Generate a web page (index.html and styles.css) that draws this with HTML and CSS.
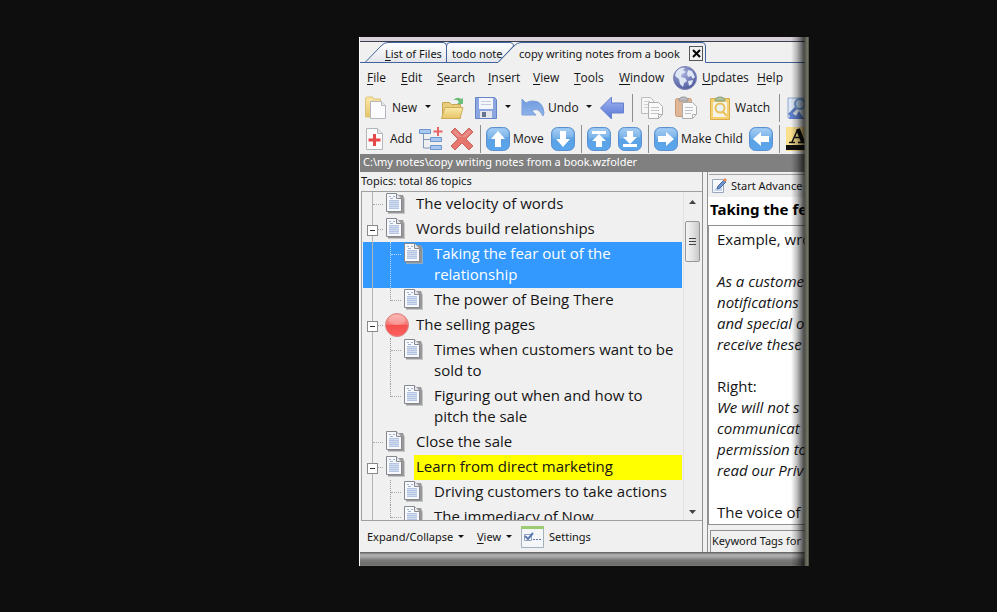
FILE: index.html
```html
<!DOCTYPE html>
<html lang="en">
<head>
<meta charset="utf-8">
<title>copy writing notes from a book</title>
<link rel="stylesheet" href="styles.css">
</head>
<body>
<svg class="defs" aria-hidden="true">
  <defs>
    <linearGradient id="blue" x1="0" y1="0" x2="0" y2="1"><stop offset="0" stop-color="#9cc8f2"/><stop offset=".5" stop-color="#5ca2e4"/><stop offset="1" stop-color="#5aa6ee"/></linearGradient>
    <linearGradient id="folder" x1="0" y1="0" x2="0" y2="1"><stop offset="0" stop-color="#fbe9a8"/><stop offset="1" stop-color="#e6c468"/></linearGradient>
    <linearGradient id="arrow" x1="0" y1="0" x2="0" y2="1"><stop offset="0" stop-color="#a3b5f3"/><stop offset="1" stop-color="#5676d4"/></linearGradient>
    <linearGradient id="undo-fill" x1="0" y1="0" x2="0" y2="1"><stop offset="0" stop-color="#6f9ade"/><stop offset="1" stop-color="#8fb4ea"/></linearGradient>
    <linearGradient id="red" x1="0" y1="0" x2="0" y2="1"><stop offset="0" stop-color="#f9aaa6"/><stop offset=".48" stop-color="#f77672"/><stop offset=".52" stop-color="#f4504e"/><stop offset="1" stop-color="#ff6260"/></linearGradient>
    <radialGradient id="sea" cx=".4" cy=".3" r=".7"><stop offset="0" stop-color="#a9b2df"/><stop offset="1" stop-color="#505b9e"/></radialGradient>
    <linearGradient id="tab" x1="0" y1="0" x2="0" y2="1"><stop offset="0" stop-color="#fff"/><stop offset="1" stop-color="#e3e6ea"/></linearGradient>
    <symbol id="doc" viewBox="0 0 20 22">
      <path d="M3 3h15l2 4v15H3z" fill="#b5b5b5" opacity=".7"/>
      <path d="M3 3h15l1 4v14H3z" fill="#8c8c8c" opacity=".8"/>
      <path d="M1.500 1.500h10l5 5v13h-15z" fill="#f8f9fc" stroke="#85888e"/>
      <path d="M11.500 1.500v5h5" fill="#e6e8ec" stroke="#85888e"/>
      <path d="M4 4.500h2M8 4.500h2M5 6.500h3" stroke="#9fb0d0"/>
      <path d="M4 8h10v9H4z" fill="#d3ddf0"/><path d="M4 8.500h10M4 10.500h10M4 12.500h10M4 14.500h10M4 16.500h10" stroke="#b4c4e2"/>
    </symbol>
    <symbol id="ball" viewBox="0 0 24 24"><circle cx="12" cy="12" r="11.500" fill="url(#red)" stroke="#d98785"/><ellipse cx="12" cy="7" rx="8.500" ry="5" fill="#fff" opacity=".22"/></symbol>
    <symbol id="tile" viewBox="0 0 24 24"><rect x=".5" y=".5" width="23" height="23" rx="6" fill="url(#blue)" stroke="#5b8fd0"/><path d="M2 12V7q0-5 5-5h10q5 0 5 5v3q-9 0-20 2z" fill="#fff" opacity=".15"/></symbol>
    <symbol id="up" viewBox="0 0 24 24"><use href="#tile"/><path d="M12 4l7 8h-4v8H9v-8H5z" fill="#fff"/></symbol>
    <symbol id="down" viewBox="0 0 24 24"><use href="#tile"/><path d="M12 20l7-8h-4V4H9v8H5z" fill="#fff"/></symbol>
    <symbol id="right" viewBox="0 0 24 24"><use href="#tile"/><path d="M20 12l-8-7v4H4v6h8v4z" fill="#fff"/></symbol>
    <symbol id="left" viewBox="0 0 24 24"><use href="#tile"/><path d="M4 12l8-7v4h8v6h-8v4z" fill="#fff"/></symbol>
    <symbol id="top" viewBox="0 0 24 24"><use href="#tile"/><path d="M5 4h14v3H5zM12 7l7 7h-4v6H9v-6H5z" fill="#fff"/></symbol>
    <symbol id="bottom" viewBox="0 0 24 24"><use href="#tile"/><path d="M5 17h14v3H5zM12 17l7-7h-4V4H9v6H5z" fill="#fff"/></symbol>
    <symbol id="new" viewBox="0 0 22 24"><path d="M.500 3l1-2h6l1 2h7v18H.500z" fill="url(#folder)" stroke="#dcc27a"/><path d="M5.500 5.500h11l4 4v13h-15z" fill="#fcfcfe" stroke="#b3b6bd"/><path d="M16.500 5.500v4h4" fill="#e8eaee" stroke="#b3b6bd"/></symbol>
    <symbol id="open" viewBox="0 0 24 24"><path d="M2.500 6.500h7l2 2h9v14h-18z" fill="#e8cd7d" stroke="#c5a452"/><path d="M5 11.500h18l-3 11H1.500z" fill="url(#folder)" stroke="#cfad58"/><path d="M13 4q5-4 8-1l2-1v6h-6l2-2q-2-3-6-2z" fill="#6cbd7a"/></symbol>
    <symbol id="save" viewBox="0 0 24 24"><path d="M1.500 1.500h19l2 2v19h-21z" fill="#8ba6e0" stroke="#6683c6"/><path d="M5 2h14v11H5z" fill="#f3f5fa"/><path d="M7 5.500h10M7 8.500h10" stroke="#c4ccdd"/><path d="M6 15h12v7H6z" fill="#e4e6eb"/><path d="M8 16h4v5H8z" fill="#66748f"/></symbol>
    <symbol id="undo" viewBox="0 0 24 24"><path d="M1 3v16h14l-4-4q6-5 11 5l1-3q-1-12-11-12-5 0-7 2z" fill="url(#undo-fill)" stroke="#7d9fdc"/></symbol>
    <symbol id="back" viewBox="0 0 24 24"><path d="M.500 12L11.500 1v6h12v10h-12v6z" fill="url(#arrow)" stroke="#6580cd"/></symbol>
    <symbol id="copy" viewBox="0 0 24 24"><path d="M1.500 1.500h9l3 3v13h-12z" fill="#f6f6f6" stroke="#bcbcbc"/><path d="M4 5.500h6M4 8.500h6M4 11.500h5" stroke="#cfcfcf"/><path d="M8.500 6.500h10l4 4v8l-4 4h-10z" fill="#fafafa" stroke="#aeaeae"/><path d="M11 11.500h8M11 14.500h8M11 17.500h8" stroke="#c4c4c4"/><path d="M18.500 22.500v-4h4" fill="none" stroke="#aeaeae"/></symbol>
    <symbol id="paste" viewBox="0 0 24 24"><rect x="1.500" y="2.500" width="16" height="18" rx="2" fill="#dfb796" stroke="#c69a77"/><path d="M5 5q0-4 4.500-4T14 5z" fill="#bcbcc0" stroke="#999"/><path d="M8.500 6.500h10l4 4v8l-4 4h-10z" fill="#fafafa" stroke="#aeaeae"/><path d="M11 11.500h8M11 14.500h8M11 17.500h6" stroke="#b9c0cc"/><path d="M18.500 22.500v-4h4" fill="none" stroke="#aeaeae"/></symbol>
    <symbol id="watch" viewBox="0 0 24 24"><path d="M2.500 2.500h19v21h-19z" fill="#f5d26f" stroke="#dcaa4a"/><path d="M5 6h14v15H5z" fill="#f4f3e6"/><path d="M7 5q0-4 5-4t5 4z" fill="#a9bd98" stroke="#8aa07b"/><circle cx="12" cy="12" r="4.500" fill="#e8f3f8" stroke="#ecc05a" stroke-width="2"/><path d="M15 16l4 4" stroke="#ecc05a" stroke-width="2"/></symbol>
    <symbol id="find" viewBox="0 0 24 24"><path d="M2 2h20v20H2z" fill="#dce7f5" stroke="#8fa9cf"/><circle cx="14" cy="8" r="5" fill="#bdd4ee" stroke="#6e93cb" stroke-width="2"/><path d="M10 12l-7 7" stroke="#5d7fc0" stroke-width="3"/><path d="M3 23l2-7 5 4 3-5 5 8z" fill="#5f82d1"/></symbol>
    <symbol id="add" viewBox="0 0 20 24"><path d="M1.500 1.500h11l5 5v16h-16z" fill="#fafafb" stroke="#b3b6bb"/><path d="M12.500 1.500v5h5" fill="#e5e7ea" stroke="#b3b6bb"/><path d="M9.500 7v12M3.500 13h12" stroke="#e5474b" stroke-width="3"/></symbol>
    <symbol id="branch" viewBox="0 0 24 24"><path d="M4.500 7v14h7M4.500 12.500h7" fill="none" stroke="#8196b8"/><g fill="#a9c8f0" stroke="#6f95cd"><path d="M.500 2.500h11v4H.500zM11.500 10.500h11v4h-11zM11.500 18.500h11v4h-11z"/></g><path d="M19 0v9M14.500 4.500h9" stroke="#e86466" stroke-width="2"/></symbol>
    <symbol id="cross" viewBox="0 0 24 24"><path d="M1 5l4-4 7 7 7-7 4 4-7 7 7 7-4 4-7-7-7 7-4-4 7-7z" fill="#e5756d" stroke="#c86660"/><path d="M3 5l2-2 7 7 7-7 2 2-5 5H8z" fill="#fff" opacity=".2"/></symbol>
    <symbol id="globe" viewBox="0 0 24 24"><circle cx="12" cy="12" r="11.500" fill="url(#sea)" stroke="#7d86b5"/><path d="M3 6q4-5 9-4l-2 2 3 2-4 2-1 3 4 1 2 3-3 2-1 4-3-3-1-5-4-3zM15 4l4 1 3 6-2 2-2-3-3 1-1-3zM15 15l5-1-1 4-3 2z" fill="#dfe7f5"/></symbol>
    <symbol id="font" viewBox="0 0 24 24"><path d="M0 0h24v24H0z" fill="#fadf8d"/><path d="M0 18h24v5H0z" fill="#111"/><path d="M3 15.500h6M12 15.500h9M6 15l6-13M7.500 10.500h8" fill="none" stroke="#111" stroke-width="1.500"/><path d="M12 2l5 13" stroke="#111" stroke-width="4"/></symbol>
    <symbol id="edit" viewBox="0 0 16 16"><path d="M1.500 1.500h11v13h-11z" fill="#f7f9fc" stroke="#9aa8be"/><path d="M3 12l8-7v8H3z" fill="#c3d6ee"/><path d="M6 11l1-3 6-6 2 2-6 6z" fill="#6d95d6" stroke="#4d6a9a"/><path d="M12 2l2-2 2 2-2 2z" fill="#e88a54"/></symbol>
    <symbol id="settings" viewBox="0 0 23 22"><path d="M.500.500h22v21H.500z" fill="#f4f6f8" stroke="#a3b1be"/><path d="M0 0h23v3H0z" fill="#9ccb74"/><path d="M3.500 8.500h7v6h-7z" fill="#fff" stroke="#8fa0bc"/><path d="M4 10l3 3 5-6" fill="none" stroke="#5b7ab5" stroke-width="2"/><path d="M12 13.500h2M15 13.500h2M18 13.500h2" stroke="#5c74a5"/></symbol>
  </defs>
</svg>
<main class="window">
  <div class="strip"></div>
  <nav class="tabs" aria-label="Open files">
    <svg class="tab-shapes" width="450" height="21" aria-hidden="true">
      <path d="M5 20.500L21 4Q24 .500 28 .500H83Q86.500.500 86.500 4V20.500z" fill="url(#tab)" stroke="#41639b"/>
      <path d="M86.500 20.500V4Q86.500.500 90 .500H149Q153.500.500 153.500 4L138 20.500z" fill="url(#tab)" stroke="#41639b"/>
      <path d="M138 20.500L154 4Q157 .500 161 .500H342Q345.500.500 345.500 4V21H138z" fill="#f0f0f0"/>
      <path d="M0 20.500H138L154 4Q157 .500 161 .500H342Q345.500.500 345.500 4V20.500H450" fill="none" stroke="#41639b"/>
    </svg>
    <button class="tab"><span><u>L</u>ist of Files</span></button>
    <button class="tab">todo note</button>
    <button class="tab">copy writing notes from a book</button>
    <button class="close" aria-label="Close tab"><svg width="9" height="9"><path d="M1 1l7 7M8 1l-7 7" stroke="#000" stroke-width="2"/></svg></button>
  </nav>
  <nav class="menu" aria-label="Menu">
    <button><span><u>F</u>ile</span></button>
    <button><span><u>E</u>dit</span></button>
    <button><span><u>S</u>earch</span></button>
    <button><span><u>I</u>nsert</span></button>
    <button><span><u>V</u>iew</span></button>
    <button><span><u>T</u>ools</span></button>
    <button><span><u>W</u>indow</span></button>
    <button><svg class="i24"><use href="#globe"/></svg><span><u>U</u>pdates</span></button>
    <button><span><u>H</u>elp</span></button>
  </nav>
  <div class="toolbar files">
    <button><svg class="i22"><use href="#new"/></svg>New</button>
    <button class="caret" aria-label="New options"></button>
    <button aria-label="Open"><svg class="i24"><use href="#open"/></svg></button>
    <button aria-label="Save"><svg class="i24"><use href="#save"/></svg></button>
    <button class="caret" aria-label="Save options"></button>
    <button class="tight"><svg class="i24"><use href="#undo"/></svg>Undo</button>
    <button class="caret" aria-label="Undo options"></button>
    <button aria-label="Back"><svg class="i24"><use href="#back"/></svg></button>
    <i class="sep"></i>
    <button aria-label="Copy"><svg class="i24"><use href="#copy"/></svg></button>
    <button aria-label="Paste"><svg class="i24"><use href="#paste"/></svg></button>
    <button class="tight"><svg class="i24"><use href="#watch"/></svg>Watch</button>
    <i class="sep"></i>
    <button aria-label="Find"><svg class="i24"><use href="#find"/></svg></button>
  </div>
  <div class="toolbar topics">
    <button><svg class="i20"><use href="#add"/></svg>Add</button>
    <button aria-label="Add branch"><svg class="i24"><use href="#branch"/></svg></button>
    <button aria-label="Delete"><svg class="i24"><use href="#cross"/></svg></button>
    <i class="sep"></i>
    <button class="tight"><svg class="i24"><use href="#up"/></svg>Move</button>
    <button aria-label="Move down"><svg class="i24"><use href="#down"/></svg></button>
    <i class="sep"></i>
    <button aria-label="Move to top"><svg class="i24"><use href="#top"/></svg></button>
    <button aria-label="Move to bottom"><svg class="i24"><use href="#bottom"/></svg></button>
    <i class="sep"></i>
    <button class="tight"><svg class="i24"><use href="#right"/></svg>Make Child</button>
    <button aria-label="Make parent"><svg class="i24"><use href="#left"/></svg></button>
    <i class="sep"></i>
    <button aria-label="Font colour"><svg class="i24"><use href="#font"/></svg></button>
  </div>
  <div class="path">C:\my notes\copy writing notes from a book.wzfolder</div>
  <div class="panes">
    <section class="outline">
      <h2 class="count">Topics: total 86 topics</h2>
      <div class="list">
        <ul class="tree">
          <li class="row"><svg class="doc"><use href="#doc"/></svg><span>The velocity of words</span></li>
          <li class="row parent"><svg class="doc"><use href="#doc"/></svg><span>Words build relationships</span></li>
          <li class="row child selected"><svg class="doc"><use href="#doc"/></svg><span>Taking the fear out of the relationship</span></li>
          <li class="row child last"><svg class="doc"><use href="#doc"/></svg><span>The power of Being There</span></li>
          <li class="row parent"><svg class="ball"><use href="#ball"/></svg><span>The selling pages</span></li>
          <li class="row child"><svg class="doc"><use href="#doc"/></svg><span>Times when customers want to be sold to</span></li>
          <li class="row child last"><svg class="doc"><use href="#doc"/></svg><span>Figuring out when and how to pitch the sale</span></li>
          <li class="row"><svg class="doc"><use href="#doc"/></svg><span>Close the sale</span></li>
          <li class="row parent marked"><svg class="doc"><use href="#doc"/></svg><span>Learn from direct marketing</span></li>
          <li class="row child"><svg class="doc"><use href="#doc"/></svg><span>Driving customers to take actions</span></li>
          <li class="row child last"><svg class="doc"><use href="#doc"/></svg><span>The immediacy of Now</span></li>
        </ul>
        <div class="scroll">
          <svg width="7" height="4"><path d="M0 4l3.500-4L7 4z" fill="#444"/></svg>
          <div class="thumb"></div>
          <svg width="7" height="4"><path d="M0 0h7L3.500 4z" fill="#444"/></svg>
        </div>
      </div>
      <div class="actions">
        <button>Expand/Collapse<i class="tri"></i></button>
        <button><span><u>V</u>iew</span><i class="tri"></i></button>
        <button><svg class="cfg"><use href="#settings"/></svg>Settings</button>
      </div>
    </section>
    <section class="note">
      <button class="advanced"><svg class="i16"><use href="#edit"/></svg>Start Advance</button>
      <h1 class="title">Taking the fear</h1>
      <div class="text">
        <p>Example, wro</p>
        <p>&nbsp;</p>
        <p><em>As a custome<br>notifications<br>and special o<br>receive these</em></p>
        <p>&nbsp;</p>
        <p>Right:</p>
        <p><em>We will not s<br>communicat<br>permission to<br>read our Priv</em></p>
        <p>&nbsp;</p>
        <p>The voice of</p>
      </div>
      <div class="keywords">Keyword Tags for</div>
    </section>
  </div>
  <div class="base"></div>
  <div class="edge"></div>
</main>
</body>
</html>
```
FILE: styles.css
```css
* { box-sizing: border-box; }
body {
  margin: 0;
  height: 100vh;
  padding: 37px 0 46px;
  display: grid;
  grid-template-columns: 359fr 450fr 188fr;
  background: #0e0e0e;
  font: 11px/16px "Noto Sans", "Open Sans", sans-serif;
  color: #151515;
  overflow: hidden;
}
.defs { position: absolute; width: 0; height: 0; }
.window {
  grid-column: 2;
  position: relative;
  display: flex;
  flex-direction: column;
  min-width: 0;
  min-height: 0;
  overflow: hidden;
  background: #f0f0f0;
  border-left: 1px solid #fff;
}
button {
  display: flex;
  align-items: center;
  padding: 0;
  border: 0;
  background: none;
  color: inherit;
  font: inherit;
  white-space: nowrap;
}
svg { flex: none; display: block; }
u { text-underline-offset: 2px; }
.i16 { width: 16px; height: 16px; }
.i20 { width: 20px; height: 24px; }
.i22 { width: 22px; height: 24px; }
.i24 { width: 24px; height: 24px; }

.strip { flex: none; height: 5px; background: #d9d0da; border-bottom: 1px solid #39414f; }
.tabs {
  flex: none;
  position: relative;
  height: 21px;
  display: grid;
  grid-template-columns: 67px 67px 170px 14px;
  align-items: center;
  padding-left: 25px;
  padding-top: 2px;
}
.tab-shapes { position: absolute; left: 0; top: 0; }
.tab { position: relative; }
.close { position: relative; width: 14px; height: 15px; justify-content: center; border: 1px solid #555; }
.menu {
  flex: none;
  height: 30px;
  display: grid;
  grid-template-columns: 34px 36px 51px 45px 41px 45px 54px 84px 40px;
  align-items: center;
  padding-left: 7px;
}
.menu, .toolbar { font-family: "Open Sans", "Noto Sans", sans-serif; font-size: 12px; }
.menu button { gap: 5px; }
.toolbar { flex: none; display: grid; height: 30px; padding-left: 5px; align-items: center; }
.toolbar button { gap: 5px; }
.toolbar .tight { gap: 3px; }
.files { grid-template-columns: 60px 15px 34px 31px 16px 65px 14px 32px 8px 34px 34px 71px 7px 24px; }
.topics { grid-template-columns: 54px 31px 30px 6px 65px 30px 6px 31px 30px 6px 95px 30px 7px 24px; height: 31px; }
.sep { width: 1px; height: 28px; background: #8e8e8e; }
.caret::before, .tri {
  content: "";
  width: 0;
  height: 3px;
  border: 3px solid transparent;
  border-top-color: #111;
  border-bottom: 0;
}
.path { flex: none; height: 18px; padding-left: 3px; background: #808080; color: #fff; white-space: nowrap; }

.panes { flex: 1; min-height: 0; display: grid; grid-template-columns: 343px 1fr; gap: 4px; }
.outline { display: flex; flex-direction: column; min-height: 0; min-width: 0; border-right: 1px solid #909090; }
.count { margin: 0; padding: 1px 0 1px 1px; height: 19px; font-size: 11px; line-height: 16px; font-weight: 400; }
.list {
  flex: 1;
  min-height: 0;
  display: grid;
  grid-template-columns: 1fr 17px;
  gap: 1px;
  margin-left: 1px;
  padding: 0 2px 0 1px;
  border: 1px solid #a0a0a0;
  border-right: 0;
  overflow: hidden;
}
.tree { margin: 0; padding: 0; list-style: none; min-height: 0; font-family: "Open Sans", "Noto Sans", sans-serif; font-size: 15px; line-height: 21px; }
.row {
  position: relative;
  display: grid;
  grid-template-columns: 31px 1fr;
  padding-left: 22px;
  background: linear-gradient(#b4b4b4, #b4b4b4) 9px 0 / 1px 100% no-repeat;
}
.row > span { padding: 1px 8px 3px 0; }
.doc { width: 20px; height: 22px; }
.ball { width: 24px; height: 24px; }
.row::before { content: ""; position: absolute; left: 10px; top: 12px; width: 10px; border-top: 1px dotted #aaa; }
.parent::after {
  content: "";
  position: absolute;
  left: 4px;
  top: 8px;
  width: 9px;
  height: 9px;
  border: 1px solid #8a8a8a;
  background: linear-gradient(#333, #333) center / 5px 1px no-repeat #fff;
}
.child { padding-left: 40px; }
.child::before { left: 28px; }
.child::after { content: ""; position: absolute; left: 27px; top: 0; bottom: 0; border-left: 1px dotted #999; }
.last::after { bottom: auto; height: 13px; }
.selected { background-color: #3399ff; color: #fff; }
.selected::before, .selected::after { border-color: #b9dcff; }
.marked > span { background: #ffff00; margin-left: -2px; padding-left: 2px; }
.scroll {
  display: flex;
  flex-direction: column;
  align-items: center;
  padding: 8px 0 6px;
  border-left: 1px solid #e2e2e2;
  background: #efefef;
}
.thumb {
  width: 15px;
  height: 41px;
  margin: 17px 0 auto;
  border: 1px solid #979797;
  border-radius: 2px;
  background:
    repeating-linear-gradient(#444 0 1px, transparent 1px 3px) center / 7px 7px no-repeat,
    linear-gradient(90deg, #f4f4f4, #e2e2e2 50%, #c9c9c9);
}
.actions {
  flex: none;
  height: 31px;
  display: grid;
  grid-template-columns: 110px 44px 1fr;
  align-items: center;
  padding-left: 7px;
}
.actions button { gap: 5px; }
.cfg { width: 23px; height: 22px; }

.note { display: flex; flex-direction: column; min-width: 0; min-height: 0; padding-top: 2px; border-left: 1px solid #909090; overflow: hidden; }
.advanced { height: 23px; flex: none; gap: 4px; margin-left: 1px; padding-left: 2px; border-top: 1px solid #a0a0a0; }
.title { margin: 0; height: 28px; flex: none; padding: 2px 0 0 2px; background: #fff; color: #000; font-size: 15px; line-height: 21px; white-space: nowrap; }
.text {
  flex: 1;
  min-height: 0;
  padding: 3px 0 0 8px;
  overflow: hidden;
  border: 1px solid #909090;
  background: #fff;
  font-family: "Open Sans", "Noto Sans", sans-serif;
  font-size: 15px;
  line-height: 21px;
  white-space: nowrap;
}
.text p { margin: 0; }
.keywords { flex: none; height: 22px; margin: 5px 0 0 2px; padding: 2px 0 0 1px; border: 1px solid #909090; border-bottom: 0; white-space: nowrap; }
.base { flex: none; height: 14px; background: linear-gradient(#6a6a6a 0 1px, #a4a4a4 2px, #b0b0b0 4px, #7c7c7c 8px, #6c6c6c 12px, #7a7a70 14px); }
.edge {
  position: absolute;
  right: 0;
  top: 0;
  bottom: 0;
  width: 18px;
  background: linear-gradient(90deg, rgba(0,0,0,0), rgba(0,0,0,.25) 6px, rgba(0,0,0,.7) 13px, #55564b 14px, #77796a 17px, #33342c 18px);
  pointer-events: none;
}
```
